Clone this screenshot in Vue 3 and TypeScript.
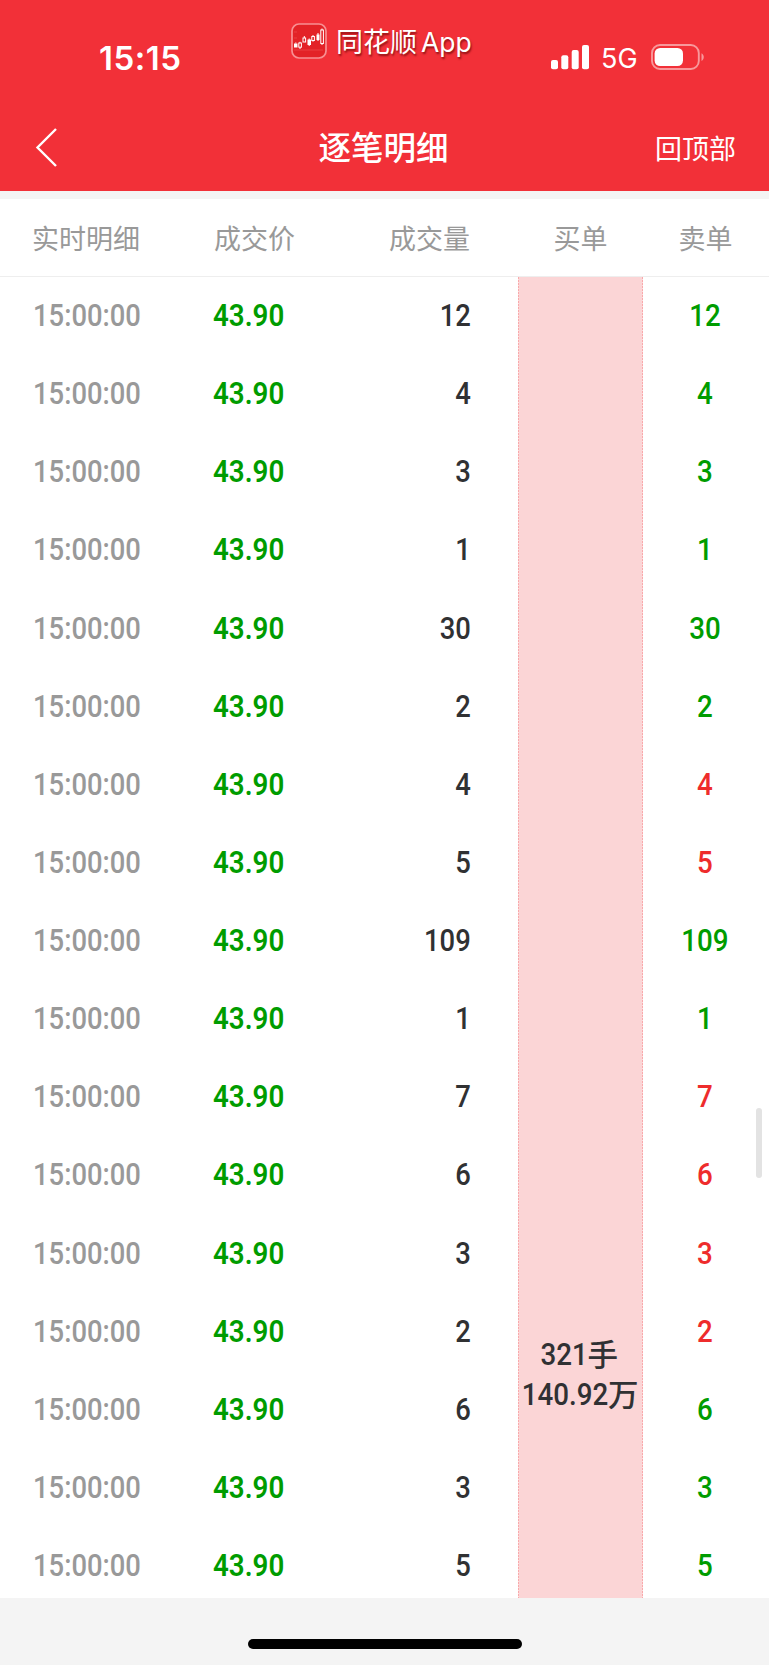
<script setup lang="ts">
interface Trade {
  volume: number
  side: 'up' | 'down'
}

const time = '15:00:00'
const price = '43.90'

const trades: Trade[] = [
  { volume: 12, side: 'down' },
  { volume: 4, side: 'down' },
  { volume: 3, side: 'down' },
  { volume: 1, side: 'down' },
  { volume: 30, side: 'down' },
  { volume: 2, side: 'down' },
  { volume: 4, side: 'up' },
  { volume: 5, side: 'up' },
  { volume: 109, side: 'down' },
  { volume: 1, side: 'down' },
  { volume: 7, side: 'up' },
  { volume: 6, side: 'up' },
  { volume: 3, side: 'up' },
  { volume: 2, side: 'up' },
  { volume: 6, side: 'down' },
  { volume: 3, side: 'down' },
  { volume: 5, side: 'down' },
]
</script>

<template>
  <div class="screen">
    <header class="top">
      <div class="status">
        <span class="clock">15:15</span>
        <div class="brand">
          <svg class="logo" width="36" height="36" viewBox="0 0 36 36">
            <rect x="1" y="1" width="34" height="34" rx="7" fill="#e32227" stroke="#f88f92" stroke-width="1.7" />
            <path d="M3 9h3M3 15h3M3 27h29" stroke="#ee4b4e" stroke-width=".7" />
            <g fill="#fff">
              <rect x="3" y="20.500" width="3.500" height="4" />
              <rect x="16.500" y="16.500" width="3.500" height="5.500" />
              <rect x="25.500" y="11.500" width="3" height="5.500" />
            </g>
            <g fill="none" stroke="#fff" stroke-width="1">
              <path d="M4.800 19.500v1M9 18.800v1.200M9 24.200v1.800M13.300 13v2M18.200 15.500v7.500M22 12v1.500M22 17.500v1.200M27 10v8M31 5.500v1.500M31 20.500v1.500" />
              <rect x="7.800" y="20" width="2.600" height="4.200" />
              <rect x="12" y="15" width="2.600" height="4" />
              <rect x="20.800" y="13.500" width="2.600" height="4" />
              <rect x="29.800" y="7" width="2.600" height="13.500" />
            </g>
          </svg>
          <span class="brand-name">同花顺</span>
          <span class="brand-app">App</span>
        </div>
        <div class="indicators">
          <svg width="40" height="26" viewBox="0 0 40 26" fill="#fff">
            <rect x="1" y="16" width="7" height="9.300" rx="2" />
            <rect x="11.300" y="11.200" width="7" height="14.100" rx="2" />
            <rect x="21.700" y="6" width="7" height="19.300" rx="2" />
            <rect x="32" y="1" width="7" height="24.300" rx="2" />
          </svg>
          <span class="network">5G</span>
          <svg width="54" height="28" viewBox="0 0 54 28">
            <rect x="2" y="2" width="46.800" height="24" rx="8" fill="none" stroke="#f8989b" stroke-width="1.900" />
            <rect x="4.600" y="5" width="28.400" height="18" rx="5.500" fill="#fff" />
            <path d="M51.500 10.200c3 1.500 3 6.200 0 7.700z" fill="#f8989b" />
          </svg>
        </div>
      </div>
      <nav class="nav">
        <svg class="back" width="24" height="42" viewBox="0 0 24 42">
          <path d="M21 2L2.500 20.500 21 39" fill="none" stroke="#fff" stroke-width="2.400" />
        </svg>
        <h1>逐笔明细</h1>
        <span class="to-top">回顶部</span>
      </nav>
    </header>

    <div class="row head">
      <span class="c-time">实时明细</span>
      <span class="c-price">成交价</span>
      <span class="c-volume">成交量</span>
      <span class="c-buy">买单</span>
      <span class="c-sell">卖单</span>
    </div>

    <main class="list">
      <div v-for="(trade, i) in trades" :key="i" class="row item">
        <span class="c-time"><b class="num">{{ time }}</b></span>
        <span class="c-price down"><b class="num">{{ price }}</b></span>
        <span class="c-volume"><b class="num">{{ trade.volume }}</b></span>
        <span class="c-buy"></span>
        <span class="c-sell" :class="trade.side"><b class="num">{{ trade.volume }}</b></span>
      </div>
      <aside class="order">
        <div class="order-line lots"><b class="num">321</b><span>手</span></div>
        <div class="order-line amount"><b class="num">140.92</b><span>万</span></div>
      </aside>
      <i class="scrollbar"></i>
    </main>

    <footer class="bottom"><i class="home"></i></footer>
  </div>
</template>

<style>
body {
  margin: 0;
}
</style>

<style scoped>
.screen {
  width: 769px;
  height: 1665px;
  overflow: hidden;
  display: flex;
  flex-direction: column;
  background: #fff;
  font-family: "Noto Sans CJK SC", sans-serif;
  color: #303133;
}

.top {
  height: 191px;
  flex: none;
  background: #f23038;
  border-bottom: 8px solid #f4f4f4;
  color: #fff;
}

.status {
  height: 106px;
  display: flex;
  align-items: flex-start;
}

.clock {
  box-sizing: border-box;
  flex: none;
  width: 291px;
  padding: 38px 0 0 99px;
  font: 600 33px/40px Inter, sans-serif;
  letter-spacing: 0.5px;
}

.brand {
  display: flex;
  align-items: center;
  width: 259px;
  height: 40px;
  padding-top: 21px;
  font-size: 27px;
  line-height: 40px;
  text-shadow: 1px 2px 2px rgba(90, 0, 0, 0.65);
  white-space: nowrap;
}

.logo {
  flex: none;
  margin-right: 9px;
}

.brand-app {
  margin-left: 4px;
  padding-top: 1px;
  font-family: Inter, sans-serif;
  font-size: 26.5px;
}

.indicators {
  display: flex;
  align-items: center;
  height: 28px;
  padding-top: 43px;
}

.network {
  width: 60px;
  box-sizing: border-box;
  padding: 3px 0 0 11px;
  font: 400 27px/28px Inter, sans-serif;
}

.nav {
  display: grid;
  grid-template-columns: 200px 1fr 200px;
  align-items: center;
  height: 85px;
}

.back {
  margin: -2px 0 0 35px;
}

h1 {
  margin: -5px 0 0 -2px;
  font-size: 32.5px;
  line-height: 84px;
  font-weight: 500;
  text-align: center;
}

.to-top {
  margin-top: -2px;
  padding-right: 33px;
  font-size: 27px;
  line-height: 84px;
  text-align: right;
}

.row {
  display: grid;
  grid-template-columns: 213px 158px 147px 125px 126px;
  align-items: center;
}

.head {
  flex: none;
  box-sizing: border-box;
  height: 78px;
  border-bottom: 1px solid #eee;
  color: #999;
  font-size: 27px;
  line-height: 76px;
}

.c-time {
  padding-left: 32px;
  color: #999;
}

.item .c-time {
  padding-left: 33px;
}

.head .c-price {
  padding-left: 1px;
}

.c-volume {
  text-align: right;
  padding-right: 48px;
}

.item .c-volume {
  padding-right: 47px;
}

.c-sell {
  padding-right: 1px;
}

.item .c-sell {
  padding-right: 2px;
}

.c-buy,
.c-sell {
  text-align: center;
}

.list {
  position: relative;
  flex: none;
  height: 1321px;
  overflow: hidden;
}

.item {
  height: 78.140px;
}

.num {
  display: inline-block;
  font-family: Roboto, sans-serif;
  font-size: 31.5px;
  line-height: 76px;
  font-weight: 500;
  transform: scaleX(0.88);
  transform-origin: left center;
}

.c-time .num {
  transform: scaleX(0.87);
}

.c-price .num {
  font-weight: 600;
}

.c-volume .num {
  transform: scaleX(0.87);
  transform-origin: right center;
}

.c-sell .num {
  transform-origin: center;
}

.down {
  color: #009c00;
}

.up {
  color: #ee2c2c;
}

.order {
  position: absolute;
  top: 0;
  left: 518px;
  width: 125px;
  height: 1321px;
  box-sizing: border-box;
  padding-top: 1058px;
  background:
    repeating-linear-gradient(#f9a9ab 0 2px, #fcdcdc 2px 3px) left / 1px 100% no-repeat,
    repeating-linear-gradient(#f9a9ab 0 2px, #fcdcdc 2px 3px) right / 1px 100% no-repeat,
    #fbd5d6;
}

.order-line {
  display: flex;
  justify-content: center;
  height: 40px;
  font-size: 30.500px;
  line-height: 40px;
  font-weight: 500;
}

.order-line .num {
  line-height: 40px;
  transform-origin: right center;
}

.order-line span {
  line-height: 37px;
}

.lots .num {
  margin-left: -9px;
}

.amount .num {
  margin-left: -13px;
}

.scrollbar {
  position: absolute;
  top: 831px;
  right: 7px;
  width: 6px;
  height: 70px;
  border-radius: 3px;
  background: #e3e3e3;
}

.bottom {
  flex: 1;
  background: #f4f4f4;
}

.home {
  display: block;
  width: 274px;
  height: 10px;
  margin: 41px 0 0 247.500px;
  border-radius: 5px;
  background: #000;
}
</style>
